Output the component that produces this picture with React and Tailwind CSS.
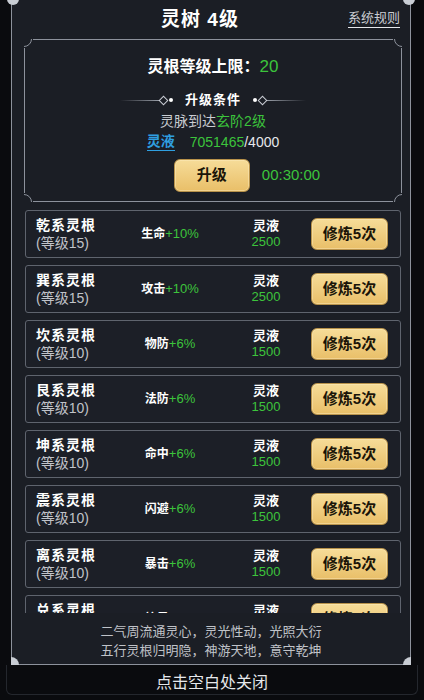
import React from "react";

const rows = [
  ["乾系灵根", 15, "生命", "+10%", 2500],
  ["巽系灵根", 15, "攻击", "+10%", 2500],
  ["坎系灵根", 10, "物防", "+6%", 1500],
  ["艮系灵根", 10, "法防", "+6%", 1500],
  ["坤系灵根", 10, "命中", "+6%", 1500],
  ["震系灵根", 10, "闪避", "+6%", 1500],
  ["离系灵根", 10, "暴击", "+6%", 1500],
  ["兑系灵根", 10, "抗暴", "+6%", 1500],
];

const FONT = { fontFamily: '"Liberation Sans","Noto Sans CJK SC",sans-serif' };

function Notch({ pos }) {
  const wrap = {
    tl: "top-[-1px] left-[-1px]",
    tr: "top-[-1px] right-[-1px]",
    bl: "bottom-[-1px] left-[-1px]",
    br: "bottom-[-1px] right-[-1px]",
  }[pos];
  const circ = {
    tl: "top-[-8px] left-[-8px]",
    tr: "top-[-8px] right-[-8px]",
    bl: "bottom-[-8px] left-[-8px]",
    br: "bottom-[-8px] right-[-8px]",
  }[pos];
  return (
    <div className={`absolute ${wrap} w-[9px] h-[9px] overflow-hidden bg-[#1b1e25]`}>
      <div className={`absolute ${circ} w-[16px] h-[16px] rounded-full border border-[#8d929c] bg-[#1b1e25]`} />
    </div>
  );
}

function GoldButton({ children, className }) {
  return (
    <div
      className={`flex items-center justify-center rounded-[6px] border border-[#b8924a] bg-gradient-to-b from-[#f6dc98] to-[#e9bf68] text-[#1a1408] font-bold shadow-[inset_0_0_0_1px_rgba(255,240,200,0.4)] ${className}`}
    >
      {children}
    </div>
  );
}

export default function App() {
  return (
    <div className="relative w-[424px] h-[700px] overflow-hidden bg-[#0a0b0e] text-white" style={FONT}>
      <div className="relative ml-[11px] w-[400px] h-[665px] border-x border-b border-[#8d929c] bg-[#1b1e25]">
        {/* corner ornaments */}
        <div className="absolute left-[-5px] top-[-7px] w-[12px] h-[12px] rounded-full bg-[#c9cdd4]" />
        <div className="absolute right-[-5px] top-[-7px] w-[12px] h-[12px] rounded-full bg-[#c9cdd4]" />
        <div className="absolute left-[-1px] bottom-[-1px] w-[8px] h-[8px] rounded-tr-full bg-[#c9cdd4]" />
        <div className="absolute right-[-1px] bottom-[-1px] w-[8px] h-[8px] rounded-tl-full bg-[#c9cdd4]" />

        {/* header */}
        <div className="relative h-[39px] flex items-center justify-center">
          <div className="mr-[22px] text-[19px] font-bold tracking-[1px] leading-none">灵树 4级</div>
          <div className="absolute right-[10px] top-[10px] text-[13px] leading-[16px] text-[#c9ccd2] border-b border-[#e6e8ec] pb-[1px]">
            系统规则
          </div>
        </div>

        {/* inner box */}
        <div className="relative ml-[12px] mr-[8px] h-[163px] border border-[#8d929c] flex flex-col items-center">
          <Notch pos="tl" />
          <Notch pos="tr" />
          <Notch pos="bl" />
          <Notch pos="br" />
          <div className="mt-[17px] h-[20px] text-[16px] leading-[20px] font-bold">
            灵根等级上限：<span className="text-[#3cc43c] font-normal text-[17px]">20</span>
          </div>
          <div className="mt-[15px] h-[16px] flex items-center">
            <div className="w-[40px] h-px bg-gradient-to-r from-transparent to-[#9ca1aa]" />
            <div className="w-[7px] h-[7px] rotate-45 border border-[#c9cdd4]" />
            <div className="w-[4px] h-[4px] ml-[2px] rounded-full bg-white" />
            <div className="mx-[12px] text-[13px] font-bold leading-[16px] tracking-[1px]">升级条件</div>
            <div className="w-[4px] h-[4px] mr-[2px] rounded-full bg-white" />
            <div className="w-[7px] h-[7px] rotate-45 border border-[#c9cdd4]" />
            <div className="w-[40px] h-px bg-gradient-to-l from-transparent to-[#9ca1aa]" />
          </div>
          <div className="mt-[3px] h-[20px] text-[14px] leading-[20px] text-[#c9ccd2]">
            灵脉到达<span className="text-[#3cc43c]">玄阶2级</span>
          </div>
          <div className="mt-[1px] h-[20px] flex items-center text-[14px] leading-[20px]">
            <span className="text-[#2f9fe0] border-b border-[#2f9fe0] leading-[17px] font-bold">灵液</span>
            <span className="ml-[15px] text-[#3cc43c]">7051465</span>
            <span className="text-[#e6e8ec]">/4000</span>
          </div>
          <div className="mt-[7px] flex items-center ml-[68px]">
            <GoldButton className="w-[76px] h-[33px] text-[15px]">升级</GoldButton>
            <span className="ml-[12px] text-[15px] text-[#3cc43c]">00:30:00</span>
          </div>
        </div>

        {/* list */}
        <div className="mt-[8px] ml-[13px] mr-[9px] h-[403px] overflow-hidden flex flex-col gap-[7px]">
          {rows.map(([name, lv, attr, val, cost]) => (
            <div
              key={name}
              className="shrink-0 h-[48px] rounded-[3px] border border-[#5f646e] bg-[#1c1f27] flex items-center pl-[10px]"
            >
              <div className="w-[100px] flex flex-col">
                <div className="text-[14px] leading-[18px] font-bold tracking-[1px]">{name}</div>
                <div className="text-[14px] leading-[18px] text-[#c0c3c9]">(等级{lv})</div>
              </div>
              <div className="w-[68px] text-center text-[12px] font-bold whitespace-nowrap">
                {attr}
                <span className="text-[#3cc43c] font-normal text-[13px]">{val}</span>
              </div>
              <div className="ml-[32px] w-[60px] flex flex-col items-center">
                <div className="text-[13px] leading-[16px] font-bold">灵液</div>
                <div className="text-[13px] leading-[16px] text-[#3cc43c]">{cost}</div>
              </div>
              <GoldButton className="ml-[15px] w-[77px] h-[32px] text-[15px]">修炼5次</GoldButton>
            </div>
          ))}
        </div>

        {/* verse */}
        <div className="pt-[9px] text-center text-[13px] leading-[19px] text-[#c0c3c9]">
          <div>二气周流通灵心，灵光性动，光照大衍</div>
          <div>五行灵根归明隐，神游天地，意守乾坤</div>
        </div>
      </div>

      <div className="mx-[6px] h-[30px] rounded-b-[6px] border-x border-b border-[#24272d] flex items-center justify-center">
        <div className="text-[16px] leading-[20px] text-[#e6e8ec] mt-[6px]">点击空白处关闭</div>
      </div>
    </div>
  );
}
